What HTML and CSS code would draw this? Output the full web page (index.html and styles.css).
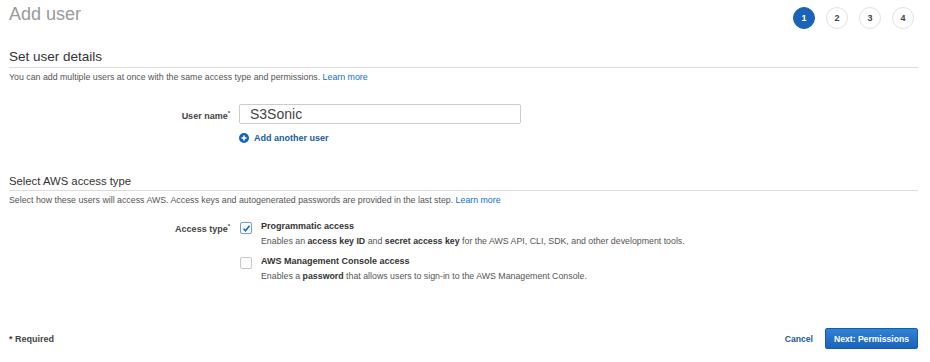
FILE: index.html
```html
<!DOCTYPE html>
<html lang="en">
<head>
    <meta charset="UTF-8">
    <title>Add user</title>
    <link rel="stylesheet" href="styles.css">
</head>
<body>
    <div class="page">
        <div class="header">
            <h1 class="title">Add user</h1>
            <div class="steps">
                <span class="step active">1</span>
                <span class="step">2</span>
                <span class="step">3</span>
                <span class="step">4</span>
            </div>
        </div>

        <h2 class="section">Set user details</h2>
        <p class="desc">You can add multiple users at once with the same access type and permissions. <a href="#">Learn more</a></p>

        <div class="row name-row">
            <label class="label">User name<sup>*</sup></label>
            <div class="field">
                <input type="text" class="text-input" value="S3Sonic">
                <a href="#" class="add-user">
                    <svg width="10" height="10" viewBox="0 0 10 10"><circle cx="5" cy="5" r="5" fill="#1565c0"/><path d="M5 2.4v5.2M2.4 5h5.2" stroke="#fff" stroke-width="1.6"/></svg>
                    Add another user
                </a>
            </div>
        </div>

        <h2 class="section second">Select AWS access type</h2>
        <p class="desc">Select how these users will access AWS. Access keys and autogenerated passwords are provided in the last step. <a href="#">Learn more</a></p>

        <div class="row access-row">
            <label class="label">Access type<sup>*</sup></label>
            <div class="field">
                <div class="option">
                    <span class="box checked">
                        <svg width="9" height="9" viewBox="0 0 9 9"><path d="M1.5 4.8l2 2 4-5" fill="none" stroke="#1565c0" stroke-width="1.6"/></svg>
                    </span>
                    <div>
                        <div class="opt-title">Programmatic access</div>
                        <div class="opt-desc">Enables an <b>access key ID</b> and <b>secret access key</b> for the AWS API, CLI, SDK, and other development tools.</div>
                    </div>
                </div>
                <div class="option">
                    <span class="box"></span>
                    <div>
                        <div class="opt-title">AWS Management Console access</div>
                        <div class="opt-desc">Enables a <b>password</b> that allows users to sign-in to the AWS Management Console.</div>
                    </div>
                </div>
            </div>
        </div>

        <div class="footer">
            <span class="required">* Required</span>
            <div class="actions">
                <a href="#" class="cancel">Cancel</a>
                <button class="next">Next: Permissions</button>
            </div>
        </div>
    </div>
</body>
</html>
```

FILE: styles.css
```css
body {
    margin: 0;
    background: #fff;
    font-family: "Liberation Sans", Arial, sans-serif;
    color: #444;
}
.page {
    padding: 0 12px 0 9px;
}
a {
    color: #0e6fd1;
    text-decoration: none;
}
.header {
    display: flex;
    justify-content: space-between;
    align-items: flex-start;
    height: 42px;
}
.title {
    margin: 4px 0 0;
    font-size: 18px;
    font-weight: normal;
    color: #9a9a9a;
}
.steps {
    display: flex;
    gap: 11px;
    padding-top: 7px;
    margin-right: 4px;
}
.step {
    width: 20px;
    height: 20px;
    border: 1px solid #e2e2e2;
    border-radius: 50%;
    display: flex;
    align-items: center;
    justify-content: center;
    font-size: 9px;
    font-weight: bold;
    color: #444;
}
.step.active {
    background: #1a63b8;
    border-color: #1a63b8;
    color: #fff;
}
.section {
    margin: 7px 0 0;
    padding-bottom: 3px;
    border-bottom: 1px solid #dcdcdc;
    font-size: 13.5px;
    font-weight: normal;
    color: #333;
}
.section.second {
    margin-top: 32px;
    font-size: 11.3px;
}
.desc {
    margin: 4px 0 0;
    font-size: 8.8px;
    color: #555;
}
.row {
    display: flex;
    align-items: flex-start;
}
.label {
    width: 230px;
    padding-right: 9px;
    box-sizing: border-box;
    text-align: right;
    font-size: 9px;
    font-weight: bold;
    color: #444;
}
.label sup {
    font-size: 6px;
}
.name-row {
    margin-top: 22px;
}
.name-row .label {
    padding-top: 6px;
}
.text-input {
    display: block;
    width: 282px;
    height: 20px;
    box-sizing: border-box;
    border: 1px solid #ccc;
    border-radius: 2px;
    padding: 0 10px;
    font-family: inherit;
    font-size: 14px;
    color: #444;
}
.add-user {
    display: flex;
    align-items: center;
    gap: 5px;
    margin-top: 9px;
    font-size: 9px;
    font-weight: bold;
    color: #1a5aa8;
}
.access-row {
    margin-top: 16px;
}
.access-row .label {
    padding-top: 2px;
}
.option {
    display: flex;
    gap: 9px;
    margin-bottom: 10px;
}
.box {
    width: 10px;
    height: 10px;
    border: 1px solid #c8c8c8;
    border-radius: 2px;
    display: flex;
    align-items: center;
    justify-content: center;
    margin: 1px 0 0 1px;
}
.box.checked {
    border-color: #6b9fd8;
}
.opt-title {
    font-size: 9px;
    font-weight: bold;
    color: #333;
}
.opt-desc {
    margin-top: 5px;
    font-size: 8.8px;
    color: #555;
}
.opt-desc b {
    color: #333;
}
.footer {
    display: flex;
    justify-content: space-between;
    align-items: center;
    margin-top: 37px;
}
.required {
    font-size: 9px;
    font-weight: bold;
    color: #444;
}
.actions {
    display: flex;
    align-items: center;
    gap: 12px;
}
.cancel {
    font-size: 8.6px;
    font-weight: bold;
    color: #1a5aa8;
}
.next {
    height: 21px;
    padding: 0 8px;
    border: 1px solid #1a5aa8;
    border-radius: 2px;
    background: linear-gradient(#2f83d6, #1a63b8);
    color: #fff;
    font-family: inherit;
    font-size: 8.6px;
    font-weight: bold;
}
```
